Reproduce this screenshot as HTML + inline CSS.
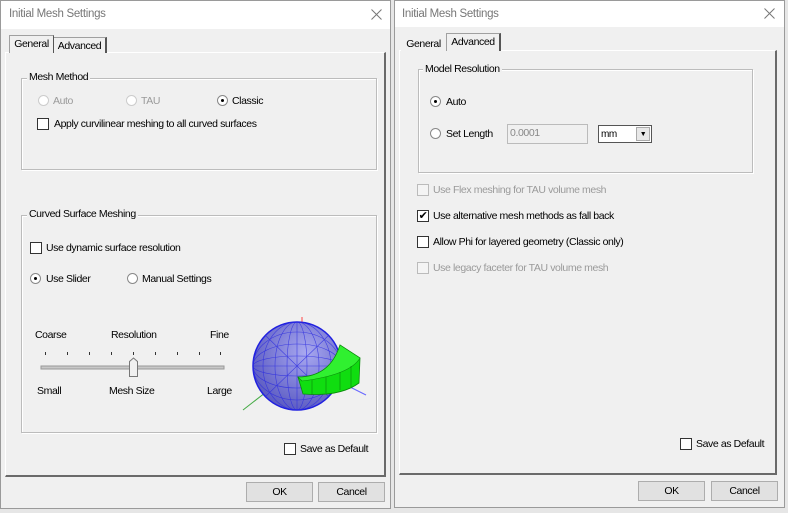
<!DOCTYPE html>
<html><head><meta charset="utf-8"><style>
*{box-sizing:border-box;margin:0;padding:0}
body{width:788px;height:513px;background:#e6e6e6;position:relative;overflow:hidden;font-family:"Liberation Sans",sans-serif;font-size:10.5px;letter-spacing:-0.4px;color:#000}
.a{position:absolute;white-space:nowrap}
.dlg{background:#f0f0f0;border:1px solid #9a9a9a}
.title{background:#fff}
.tt{font-size:11.5px;letter-spacing:-0.3px;color:#777}
.panel{border:1px solid #a0a0a0;border-right:2px solid #6a6a6a;border-bottom:2px solid #6a6a6a;border-top-color:#fff;border-left-color:#fff}
.grp{border:1px solid #bcbcbc;box-shadow:inset 1px 1px 0 #fff,1px 1px 0 #fff}
.lg{background:#f0f0f0;padding:0 2px}
.cb{width:12px;height:12px;border:1px solid #333;background:#fff}
.cb.d{border-color:#bbb;background:#f4f4f4}
.rb{width:11px;height:11px;border-radius:50%;border:1px solid #888;background:#fff}
.rb.d{border-color:#ccc}
.rb.on::after{content:"";position:absolute;left:3px;top:3px;width:3px;height:3px;border-radius:50%;background:#000}
.gray{color:#9a9a9a}
.btn{background:#e1e1e1;border:1px solid #adadad;text-align:center;line-height:18px}
.tab{border:1px solid #a0a0a0;border-bottom:none;background:#f0f0f0;text-align:center}
</style></head><body>

<!-- LEFT DIALOG -->
<div class="a dlg" style="left:0;top:0;width:391px;height:509px"></div>
<div class="a title" style="left:1px;top:1px;width:389px;height:28px"></div>
<div class="a tt" style="left:9px;top:8px">Initial Mesh Settings</div>
<svg class="a" style="left:371px;top:9px" width="11" height="11"><path d="M0.5 0.5 L10.5 10.5 M10.5 0.5 L0.5 10.5" stroke="#777" stroke-width="1"/></svg>
<div class="a panel" style="left:5px;top:52px;width:381px;height:425px"></div>
<div class="a tab" style="left:9px;top:35px;width:45px;height:18px;border-right:1px solid #555;line-height:16px">General</div>
<div class="a tab" style="left:54px;top:37px;width:53px;height:16px;border-left:none;border-right:2px solid #555;line-height:16px">Advanced</div>

<div class="a grp" style="left:21px;top:78px;width:356px;height:92px"></div>
<div class="a lg" style="left:27px;top:71px">Mesh Method</div>
<div class="a rb d" style="left:38px;top:95px"></div><div class="a gray" style="left:53px;top:95px">Auto</div>
<div class="a rb d" style="left:126px;top:95px"></div><div class="a gray" style="left:141px;top:95px">TAU</div>
<div class="a rb on" style="left:217px;top:95px"></div><div class="a" style="left:232px;top:95px">Classic</div>
<div class="a cb" style="left:37px;top:118px"></div><div class="a" style="left:54px;top:118px">Apply curvilinear meshing to all curved surfaces</div>

<div class="a grp" style="left:21px;top:215px;width:356px;height:218px"></div>
<div class="a lg" style="left:27px;top:208px">Curved Surface Meshing</div>
<div class="a cb" style="left:30px;top:242px"></div><div class="a" style="left:46px;top:242px">Use dynamic surface resolution</div>
<div class="a rb on" style="left:30px;top:273px"></div><div class="a" style="left:46px;top:273px">Use Slider</div>
<div class="a rb" style="left:127px;top:273px"></div><div class="a" style="left:142px;top:273px">Manual Settings</div>
<div class="a" style="left:35px;top:329px">Coarse</div>
<div class="a" style="left:111px;top:329px">Resolution</div>
<div class="a" style="left:210px;top:329px">Fine</div>
<div class="a" style="left:37px;top:385px">Small</div>
<div class="a" style="left:109px;top:385px">Mesh Size</div>
<div class="a" style="left:207px;top:385px">Large</div>
<svg class="a" style="left:35px;top:345px" width="195" height="35">
<g stroke="#333" stroke-width="1">
<line x1="10.5" y1="7" x2="10.5" y2="10"/><line x1="32.5" y1="7" x2="32.5" y2="10"/><line x1="54.5" y1="7" x2="54.5" y2="10"/><line x1="76.5" y1="7" x2="76.5" y2="10"/><line x1="98.5" y1="7" x2="98.5" y2="10"/><line x1="120.5" y1="7" x2="120.5" y2="10"/><line x1="142.5" y1="7" x2="142.5" y2="10"/><line x1="164.5" y1="7" x2="164.5" y2="10"/><line x1="185.5" y1="7" x2="185.5" y2="10"/></g>
<rect x="6" y="21" width="183" height="3" fill="#c8c8c8" stroke="#999" stroke-width="1"/>
<path d="M94.5 16.5 L98.5 13 L102.5 16.5 L102.5 31.5 L94.5 31.5 Z" fill="#f0f0f0" stroke="#777"/>
</svg>
<svg class="a" style="left:240px;top:315px" width="130" height="100">
<line x1="62" y1="2" x2="62" y2="12" stroke="#f44"/>
<line x1="3" y1="95" x2="30" y2="74" stroke="#4a4"/>
<line x1="110" y1="72" x2="126" y2="80" stroke="#66f"/>
<defs><radialGradient id="g" cx="0.6" cy="0.35" r="0.7"><stop offset="0" stop-color="#a8a8f0"/><stop offset="1" stop-color="#5858c0"/></radialGradient></defs>
<circle cx="57" cy="51" r="44" fill="url(#g)" stroke="#2020e0" stroke-width="1.5"/>
<g stroke="#2a2ae0" stroke-width="0.6" fill="none" opacity="0.8">
<ellipse cx="57" cy="51" rx="44" ry="10"/><ellipse cx="57" cy="51" rx="44" ry="22"/><ellipse cx="57" cy="51" rx="44" ry="34"/>
<ellipse cx="57" cy="51" rx="10" ry="44"/><ellipse cx="57" cy="51" rx="22" ry="44"/><ellipse cx="57" cy="51" rx="34" ry="44"/>
<line x1="13" y1="51" x2="101" y2="51"/><line x1="57" y1="7" x2="57" y2="95"/>
<line x1="25" y1="20" x2="89" y2="82"/><line x1="89" y1="20" x2="25" y2="82"/>
</g>
<path d="M58 62 Q90 62 100 30 L120 43 L119 68 Q100 82 63 79 Z" fill="#10dd10" stroke="#0a8a0a" stroke-width="0.8"/>
<path d="M58 62 Q90 62 100 30 L120 43 Q110 60 62 66 Z" fill="#30f030" stroke="#0a8a0a" stroke-width="0.6"/>
<g stroke="#0a700a" stroke-width="0.5"><line x1="72" y1="65" x2="72" y2="80"/><line x1="86" y1="62" x2="86" y2="78"/><line x1="100" y1="57" x2="100" y2="75"/><line x1="111" y1="51" x2="111" y2="72"/></g>
</svg>

<div class="a cb" style="left:284px;top:443px"></div><div class="a" style="left:300px;top:443px">Save as Default</div>
<div class="a btn" style="left:246px;top:482px;width:67px;height:20px">OK</div>
<div class="a btn" style="left:318px;top:482px;width:67px;height:20px">Cancel</div>

<!-- RIGHT DIALOG -->
<div class="a dlg" style="left:394px;top:0;width:391px;height:508px"></div>
<div class="a title" style="left:395px;top:1px;width:389px;height:26px"></div>
<div class="a tt" style="left:402px;top:8px">Initial Mesh Settings</div>
<svg class="a" style="left:764px;top:8px" width="11" height="11"><path d="M0.5 0.5 L10.5 10.5 M10.5 0.5 L0.5 10.5" stroke="#777" stroke-width="1"/></svg>
<div class="a panel" style="left:399px;top:50px;width:378px;height:425px"></div>
<div class="a tab" style="left:401px;top:36px;width:45px;height:15px;border:none;line-height:16px">General</div>
<div class="a tab" style="left:446px;top:33px;width:55px;height:18px;border-right:2px solid #555;line-height:16px">Advanced</div>

<div class="a grp" style="left:418px;top:69px;width:335px;height:104px"></div>
<div class="a lg" style="left:423px;top:63px">Model Resolution</div>
<div class="a rb on" style="left:430px;top:96px"></div><div class="a" style="left:446px;top:96px">Auto</div>
<div class="a rb" style="left:430px;top:128px"></div><div class="a" style="left:446px;top:128px">Set Length</div>
<div class="a" style="left:507px;top:124px;width:81px;height:20px;border:1px solid #bbb;background:#f0f0f0;color:#888;padding:2px 2px">0.0001</div>
<div class="a" style="left:598px;top:125px;width:54px;height:18px;border:1px solid #555;background:#fff;padding:3px 2px;font-size:10px">mm</div>
<div class="a" style="left:636px;top:127px;width:14px;height:14px;background:#e8e8e8;border:1px solid #aaa;font-size:7px;text-align:center;line-height:13px">▼</div>

<div class="a cb d" style="left:417px;top:184px"></div><div class="a gray" style="left:433px;top:184px">Use Flex meshing for TAU volume mesh</div>
<div class="a cb" style="left:417px;top:210px;font-size:11px;line-height:10px;text-align:center">✔</div><div class="a" style="left:433px;top:210px">Use alternative mesh methods as fall back</div>
<div class="a cb" style="left:417px;top:236px"></div><div class="a" style="left:433px;top:236px">Allow Phi for layered geometry (Classic only)</div>
<div class="a cb d" style="left:417px;top:262px"></div><div class="a gray" style="left:433px;top:262px">Use legacy faceter for TAU volume mesh</div>

<div class="a cb" style="left:680px;top:438px"></div><div class="a" style="left:696px;top:438px">Save as Default</div>
<div class="a btn" style="left:638px;top:481px;width:67px;height:20px">OK</div>
<div class="a btn" style="left:711px;top:481px;width:67px;height:20px">Cancel</div>
</body></html>
